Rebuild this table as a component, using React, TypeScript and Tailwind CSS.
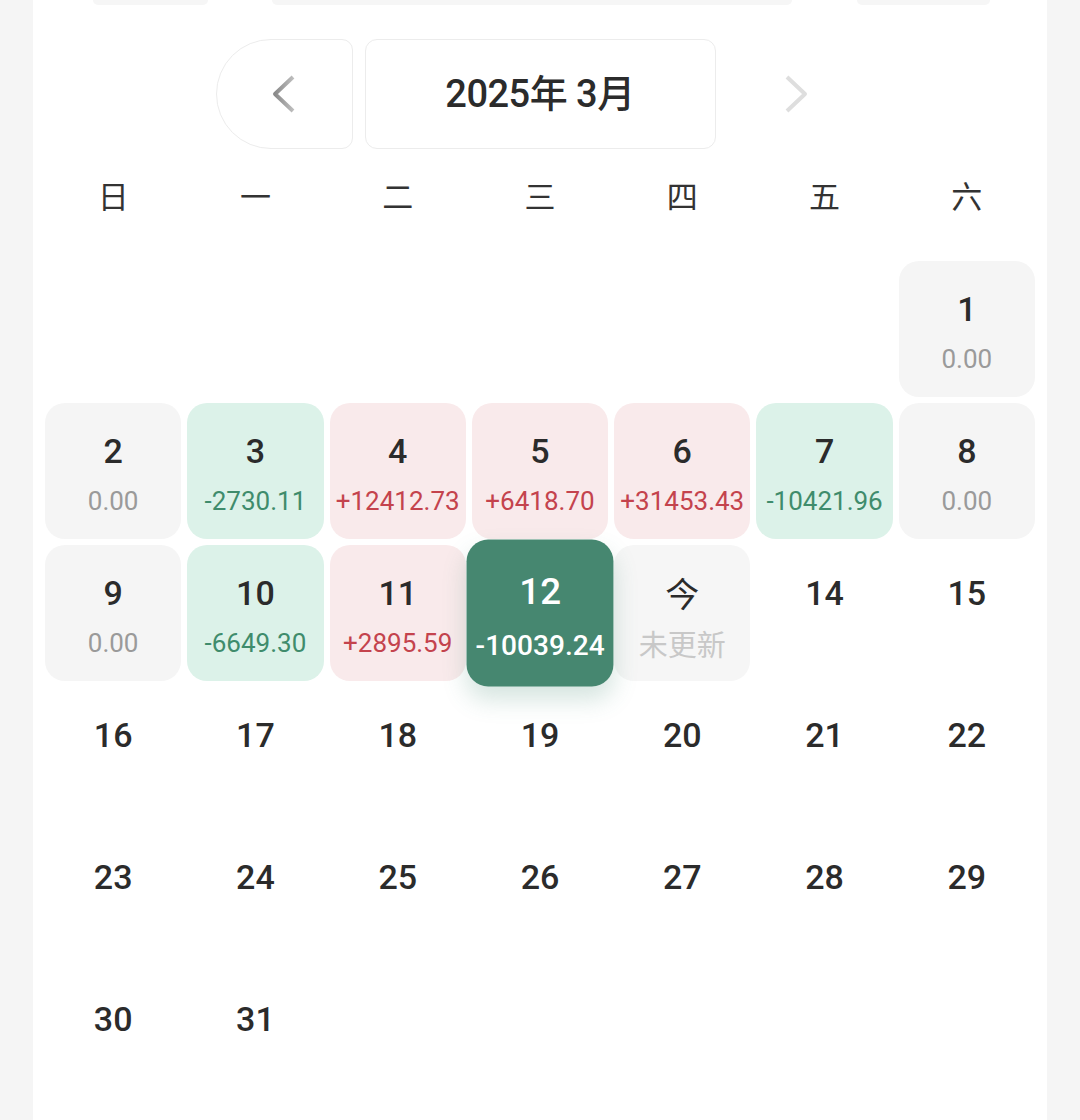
import React from "react";

type Kind = "zero" | "up" | "down" | "selected" | "today" | "none";

interface DayCell {
	day: number;
	amount?: string;
	kind: Kind;
}

const data: Record<number, { amount: string; kind: Kind }> = {
	1: { amount: "0.00", kind: "zero" },
	2: { amount: "0.00", kind: "zero" },
	3: { amount: "-2730.11", kind: "down" },
	4: { amount: "+12412.73", kind: "up" },
	5: { amount: "+6418.70", kind: "up" },
	6: { amount: "+31453.43", kind: "up" },
	7: { amount: "-10421.96", kind: "down" },
	8: { amount: "0.00", kind: "zero" },
	9: { amount: "0.00", kind: "zero" },
	10: { amount: "-6649.30", kind: "down" },
	11: { amount: "+2895.59", kind: "up" },
	12: { amount: "-10039.24", kind: "selected" },
	13: { amount: "未更新", kind: "today" },
};

const weekdays = ["日", "一", "二", "三", "四", "五", "六"];

const numFont = { fontFamily: "Roboto, 'Noto Sans CJK SC', sans-serif" };
const cjkFont = { fontFamily: "'Noto Sans CJK SC', 'Noto Sans', sans-serif" };

const cellBg: Record<Kind, string> = {
	zero: "bg-[#f5f5f5]",
	up: "bg-[#f9eaeb]",
	down: "bg-[#dcf2e9]",
	selected: "bg-[#468770] scale-[1.08] shadow-[0_12px_22px_rgba(70,135,112,0.22)] z-10",
	today: "bg-[#f6f6f6]",
	none: "",
};

const amountColor: Record<Kind, string> = {
	zero: "text-[#9a9a9a]",
	up: "text-[#c4434d]",
	down: "text-[#3f8c6c]",
	selected: "text-white",
	today: "text-[#c8c8c8]",
	none: "",
};

const Cell = ({ cell }: { cell: DayCell }) => {
	const isToday = cell.kind === "today";
	return (
		<div
			className={`relative h-[136px] rounded-[20px] flex flex-col items-center pt-[24px] ${cellBg[cell.kind]}`}
		>
			{isToday ? (
				<span className="text-[34px] leading-[48px] text-[#2b2b2b]" style={cjkFont}>
					今
				</span>
			) : (
				<span
					className={`text-[34px] leading-[48px] font-medium ${cell.kind === "selected" ? "text-white" : "text-[#2b2b2b]"}`}
					style={numFont}
				>
					{cell.day}
				</span>
			)}
			{cell.amount && (
				<span
					className={`mt-[8px] leading-[36px] ${isToday ? "text-[29px]" : "text-[26px]"} ${amountColor[cell.kind]} ${cell.kind === "selected" ? "font-medium" : ""}`}
					style={isToday ? cjkFont : numFont}
				>
					{cell.amount}
				</span>
			)}
		</div>
	);
};

const Calendar = () => {
	const cells: (DayCell | null)[] = [];
	for (let i = 0; i < 6; i++) cells.push(null);
	for (let d = 1; d <= 31; d++) {
		const info = data[d];
		cells.push(info ? { day: d, amount: info.amount, kind: info.kind } : { day: d, kind: "none" });
	}

	return (
		<div className="w-[1014px] ml-[33px] min-h-[1120px] bg-white px-[12px]">
			{/* bottoms of the tab pills above, cut off by the screen edge */}
			<div className="flex h-[5px]">
				<div className="ml-[48px] w-[115px] bg-[#f6f6f6] rounded-b-[14px]" />
				<div className="ml-[64px] w-[520px] bg-[#f6f6f6] rounded-b-[14px]" />
				<div className="ml-[65px] w-[133px] bg-[#f6f6f6] rounded-b-[14px]" />
			</div>

			<div className="mt-[34px] flex justify-center gap-[12px]">
				<button className="w-[137px] h-[110px] flex items-center justify-center border border-[#ececec] rounded-l-[60px] rounded-r-[12px] bg-white">
					<svg width="30" height="40" viewBox="0 0 30 40">
						<defs>
							<linearGradient id="prevg" x1="0" y1="0" x2="1" y2="0">
								<stop offset="0" stopColor="#8a8a8a" />
								<stop offset="1" stopColor="#bdbdbd" />
							</linearGradient>
						</defs>
						<polyline
							points="24,3 6,20 24,37"
							fill="none"
							stroke="url(#prevg)"
							strokeWidth="4"
							strokeLinejoin="round"
						/>
					</svg>
				</button>
				<div className="w-[351px] h-[110px] flex items-center justify-center border border-[#ececec] rounded-[12px]">
					<span className="text-[38px] font-medium text-[#2b2b2b] tracking-[-0.5px]" style={numFont}>
						2025年 3月
					</span>
				</div>
				<button className="w-[137px] h-[110px] flex items-center justify-center">
					<svg width="30" height="40" viewBox="0 0 30 40">
						<polyline
							points="6,3 24,20 6,37"
							fill="none"
							stroke="#dedede"
							strokeWidth="4"
							strokeLinejoin="round"
						/>
					</svg>
				</button>
			</div>

			<div className="mt-[22px] mb-[42px] grid grid-cols-7 gap-[6px]">
				{weekdays.map((w) => (
					<div key={w} className="h-[48px] flex items-center justify-center text-[31px] text-[#333]" style={cjkFont}>
						{w}
					</div>
				))}
			</div>

			<div className="grid grid-cols-7 gap-[6px]">
				{cells.map((c, i) => (c ? <Cell key={i} cell={c} /> : <div key={i} className="h-[136px]" />))}
			</div>
		</div>
	);
};

export default function App() {
	return (
		<div className="w-[1080px] min-h-[1120px] bg-[#f5f5f5] overflow-hidden">
			<Calendar />
		</div>
	);
}
